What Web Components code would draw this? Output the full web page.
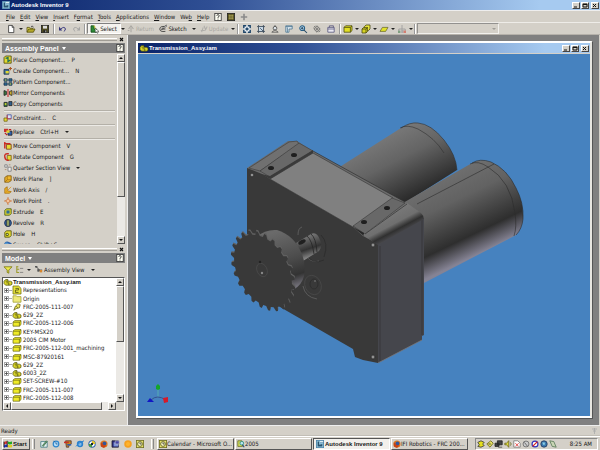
<!DOCTYPE html>
<html lang="en">
<head>
<meta charset="utf-8">
<title>Autodesk Inventor 9</title>
<style>
html, body { margin: 0; height: 100%; }
body {
  --face: #d4d0c8; --dark: #808080; --light: #ffffff; --ink: #181818;
  --bold: bold 6px/8px "Liberation Sans", Arial, sans-serif;
  --title: linear-gradient(90deg, #0a246a, #2f4f94 35%, #a6caf0 90%);
  font: 6px/8px "DejaVu Sans Condensed", "Liberation Sans", Arial, sans-serif; color: var(--ink);
  background: var(--face); overflow: hidden;
}
</style>
</head>
<body>
<inventor-app></inventor-app>
<script>
const ICONS = {
  app: '<rect width="10" height="10" fill="#4b82a8"/><path d="M1 9V1h4v3h4v5z" fill="#9ed0e4"/><path d="M2 8V2h2v4l4-1v3z" fill="#2b5470"/><path d="M5 1h4v2H5z" fill="#dceef4"/>',
  asm: '<path d="M0 4l2-2h3v2h3l2 1v3l-2 1H2L0 7z" fill="#d9d52a" stroke="#3c3c08" stroke-width=".8"/><path d="M3 6h3v3M2 4h3" stroke="#3c3c08" stroke-width=".8" fill="none"/>',
  help: '<rect x="1" y=".5" width="8" height="9" fill="#fffff4" stroke="#333"/><path d="M3.500 3.500Q3.500 2 5 2t1.500 1.500Q6.500 5 5 5v1M5 7v1.200" fill="none" stroke="#222"/>',
  grid: '<rect x=".5" y=".5" width="9" height="9" fill="#55501e" stroke="#222"/><path d="M2 3h6M2 5h6M2 7h6M3.500 2v6M6.500 2v6" stroke="#b9b167" stroke-width=".7"/>',
  plus: '<path d="M5 1v8M1 5h8" stroke="#8a8a8a" stroke-width="2"/>',
  page: '<path d="M2 .5h4.500L8.500 3v6.500H2z" fill="#fff" stroke="#333"/><path d="M6.500.5V3h2" fill="none" stroke="#333"/>',
  open: '<path d="M0 9V3h3l1 1h3v2" fill="#e5dc62" stroke="#554f0c"/><path d="M0 9l2-4h8L8 9z" fill="#b5a92a" stroke="#554f0c"/><path d="M5 2q2-2 3 1" fill="none" stroke="#333"/>',
  save: '<rect x=".5" y=".5" width="9" height="9" fill="#504c20" stroke="#222"/><path d="M2.500 1h5v3.500h-5z" fill="#ddd"/><path d="M3 6.500h4V9H3z" fill="#222"/><path d="M5.500 7h1v2h-1z" fill="#ccc"/>',
  undo: '<path d="M2 5q5-4 6 0 0 2-2 3" fill="none" stroke="#35357c" stroke-width="1.200"/><path d="M0 2v5h4z" fill="#35357c"/>',
  redo: '<path d="M8 5Q3 1 2 5q0 2 2 3" fill="none" stroke="#a5a5a5" stroke-width="1.200"/><path d="M10 2v5H6z" fill="#a5a5a5"/>',
  select: '<path d="M0 1h4v4h3v4H0z" fill="#2d8a36" stroke="#154a1c"/><path d="M3 1l2 1v3" stroke="#d9d52a" fill="none"/><path d="M5 4l5 4-2 .3 1 1.700-1 .5-1-2-1.500 1z" fill="#fff" stroke="#222" stroke-width=".6"/>',
  ret: '<path d="M5 9V3M2 5l3-4 3 4M1 7h2" fill="none" stroke="#a9a7a2" stroke-width="1.300"/>',
  sketch: '<path d="M8 2Q1 1 1 5t7 3" fill="none" stroke="#333"/><path d="M3 6l1-2 5-4 1 1-5 4z" fill="#eee" stroke="#222" stroke-width=".7"/><path d="M4 5h4" stroke="#222"/>',
  update: '<path d="M2 9l2-6M5 1l2 5 2-4M1 7h5" fill="none" stroke="#b0aeaa" stroke-width="1.300"/>',
  zoomall: '<rect x=".5" y=".5" width="9" height="9" fill="#eaf0f5"/><path d="M1 4V1h3M6 1h3v3M9 6v3H6M4 9H1V6" fill="none" stroke="#1e4468" stroke-width="1.800"/><path d="M3 5h4M5 3v4" stroke="#1e4468" stroke-width="2"/>',
  zoomwin: '<rect x="2" y="2" width="6" height="6" fill="#c7d8e6" stroke="#345"/><path d="M2 0v2H0M8 0v2h2M2 10V8H0M8 10V8h2M4 4l4 4" fill="none" stroke="#345"/>',
  zoom: '<circle cx="5" cy="4" r="2.300" fill="#dfe6ea" stroke="#444"/><path d="M5 0v2M5 6L1 9h8L5 6" fill="none" stroke="#555"/>',
  pan: '<path d="M1 9V1h8v4H5v4z" fill="#dde8ef" stroke="#4b7591"/><path d="M1 2h8M3 3v6" stroke="#4b7591"/>',
  lens: '<circle cx="4" cy="4" r="3" fill="#b8d7ec" stroke="#265d85" stroke-width="1.300"/><path d="M6 6l4 4M2.500 4h3M4 2.500v3" stroke="#284b66" stroke-width="1.300"/>',
  rotate: '<path d="M5 1l4 4-4 4-4-4zM3 1L1 3M9 7L7 9M5 3v4M3 5h4" fill="none" stroke="#5b5b5b"/>',
  look: '<path d="M1 3h8v6H1z" fill="#eceaf3" stroke="#57557c"/><path d="M1 5h8M3 3V1h5v2" fill="none" stroke="#57557c"/>',
  shade: '<path d="M0 3l2-2h8v6L8 9H0z" fill="#e2df25" stroke="#4a4a10"/><path d="M0 3h8l2-2M8 3v6" fill="none" stroke="#4a4a10"/>',
  shade2: '<path d="M3 2l2-2h5v5L8 7H3z" fill="#f0ed40" stroke="#4a4a10"/><path d="M0 5l2-2h5v5l-2 2H0z" fill="#d8d422" stroke="#4a4a10"/><path d="M0 5h5l2-2M5 5v5" fill="none" stroke="#4a4a10"/>',
  plane: '<path d="M3 3h7L7 8H0z" fill="#e2e22c" stroke="#55551a" stroke-width=".8"/>',
  ortho: '<path d="M5 0v6M1 9V5h8v4" fill="none" stroke="#999"/><path d="M0 7h3v3H0z" fill="#80a080"/><path d="M4 6h3v4H4z" fill="#aaa"/><path d="M7 7h3v3H7z" fill="#d57e70"/>',
  place: '<path d="M0 2l2-2h7v9H0z" fill="#e2d930" stroke="#4c480a"/><path d="M2 3l3-1v5l3-2" fill="none" stroke="#1d6f57" stroke-width="1.600"/>',
  create: '<path d="M0 3h6v6H0z" fill="#3d6c97" stroke="#1b3048"/><path d="M2 5h4v3H2z" fill="#e2d930"/><path d="M8 0v4M6 2h4" stroke="#a52" stroke-width="1.300"/>',
  pattern: '<g fill="#2f6f9d" stroke="#162f44"><path d="M0 1h4v3H0zM6 1h4v3H6zM0 6h4v3H0zM6 6h4v3H6z"/></g><path d="M1 2h2v1H1zM7 7h2v1H7z" fill="#e2d930"/>',
  mirror: '<path d="M0 2l3 1v4L0 8z" fill="#3b7d42" stroke="#222"/><path d="M10 2L7 3v4l3 1z" fill="#d8b930" stroke="#222"/><path d="M5 0v10" stroke="#c22" stroke-width="1.300"/>',
  copy: '<path d="M0 3h4v5H0z" fill="#3b7d42" stroke="#222"/><path d="M6 2h4v5H6z" fill="#2f6090" stroke="#222"/><path d="M1 4h2v2H1z" fill="#e2d930"/>',
  constraint: '<path d="M4 1h5v5H4z" fill="#dce3f4" stroke="#4153a5"/><path d="M0 5h4v4H0z" fill="#e8dd35" stroke="#736512"/><path d="M4 1v5h5" fill="none" stroke="#c33"/>',
  replace: '<path d="M0 1h5v4H0z" fill="#c9302c"/><path d="M5 4h5v5H5z" fill="#2f62b0" stroke="#222"/><path d="M1 6l3 3M6 2h3" stroke="#b52020" stroke-width="1.500"/><path d="M3 3h4v3H3z" fill="#e2d930"/>',
  move: '<path d="M3 3h6v6H3z" fill="#e4dc35" stroke="#7a3510"/><path d="M0 2h8M1 0v8" stroke="#cc2a22" stroke-width="1.800"/>',
  rot: '<path d="M4 3h5v6H4z" fill="#e4dc35" stroke="#7a5510"/><path d="M6 1Q0 0 1 5t5 4" fill="none" stroke="#cc2a22" stroke-width="1.800"/>',
  section: '<path d="M1 1h3v3H1zM5 4h4v5H5z" fill="#eee" stroke="#777"/><path d="M1 7h2M6 1h2" stroke="#a86"/>',
  wplane: '<path d="M1 3l3-2h5v6L6 9H1z" fill="#f0b92d" stroke="#7a5510"/><path d="M4 1v5l-3 3M4 6h5" fill="none" stroke="#a56d10"/>',
  waxis: '<path d="M1 3l3-2v5l5 1-2 2H1z" fill="#f0b92d" stroke="#a56d10"/><path d="M1 9l8-8" stroke="#d8941d"/>',
  wpoint: '<path d="M5 0v10M0 5h10" stroke="#d48751" stroke-width="1.200"/><path d="M5 2l3 3-3 3-3-3z" fill="#f3c49c" stroke="#c4662a"/>',
  extrude: '<path d="M1 3l2-2h6v6L7 9H1z" fill="#e2d930" stroke="#3f5412"/><path d="M3 3h4v4H3z" fill="#2e6b94"/>',
  revolve: '<circle cx="5" cy="5" r="4.300" fill="#3269a0" stroke="#1c2a52"/><path d="M3 1h4v8H3z" fill="#d9d34c" stroke="#1c2a52"/><path d="M5 1v8" stroke="#274f78"/>',
  hole: '<path d="M1 3l2-2h6v6L7 9H1z" fill="#e2d930" stroke="#4f4c10"/><circle cx="4" cy="5.500" r="2" fill="#58620c"/><circle cx="4" cy="5.500" r=".8" fill="#eee"/>',
  sweep: '<path d="M1 8Q1 1 5 2t5 4" fill="none" stroke="#2d65ae" stroke-width="2.500"/><circle cx="3" cy="4" r="2" fill="#5599cc"/>',
  filter: '<path d="M0 1h10L6 5v4L4 8V5z" fill="#f0ed4a" stroke="#76720e"/>',
  treeview: '<path d="M1 0v8h3M1 4h3M1 1h2" fill="none" stroke="#9b9a2c" stroke-width="1.300"/><path d="M5 3h4M5 8h4" stroke="#777"/>',
  asmview: '<path d="M1 1l3 2v4M4 5h5" fill="none" stroke="#444"/><path d="M0 0h3v2H0zM3 4h3v3H3z" fill="#555"/><path d="M6 5h3v3H6z" fill="#d8872d"/>',
  rep: '<path d="M0 0h7l3 3v7H0z" fill="#e9e53a" stroke="#77740f"/><path d="M3 3h4v2H3v3h4" fill="none" stroke="#4b4b18"/>',
  folder: '<path d="M0 1h4l1 1h5v7H0z" fill="#eeea7a" stroke="#a5a13c"/>',
  part: '<path d="M0 4l2-2h8v5L8 9H0z" fill="#efec28" stroke="#5a580c" stroke-width=".8"/><path d="M0 4h8l2-2M8 4v5" fill="none" stroke="#5a580c" stroke-width=".8"/>',
  pin: '<path d="M1 9l2-5 3-3 3 1-1 4-4 1z" fill="#eae45c" stroke="#666317"/><path d="M4 4l2 2" stroke="#666317"/>',
  start: '<path d="M0 3q2-2 4-1v3Q2 4 0 6z" fill="#d33"/><path d="M5 2q2 1 5 0v3q-3 1-5 0z" fill="#2a2"/><path d="M0 7q2-2 4-1v3q-2-1-4 1z" fill="#23c"/><path d="M5 6q2 1 5 0v3q-3 1-5 0z" fill="#dc2"/><path d="M4 1v8M0 2v7" stroke="#222" stroke-width="1.200"/>',
  desktop: '<path d="M1 2h8v7H1z" fill="#e8f3f0" stroke="#3c7781"/><path d="M3 7l5-6 1 1-5 6z" fill="#7fb565" stroke="#365"/>',
  outlook: '<circle cx="5" cy="5" r="3.500" fill="#b6ddf6" stroke="#2f86cc" stroke-width="1.500"/><path d="M5 3v2h2M2 1l2 2" stroke="#1b5d9c" fill="none"/>',
  zip: '<path d="M2 1h7v4L6 7v2H3z" fill="#c28a25" stroke="#533"/><path d="M0 2h6v2H0z" fill="#c92f24"/><path d="M4 5h5v2H4z" fill="#365ba5"/>',
  ie: '<circle cx="5" cy="5" r="3" fill="#d4ecfb" stroke="#2b82cf" stroke-width="2"/><path d="M3 5h5M0 8Q3 3 10 1" stroke="#2b82cf" stroke-width="1.200" fill="none"/>',
  media: '<circle cx="5" cy="5" r="4" fill="#fff" stroke="#2c62a8" stroke-width="1.300"/><path d="M5 1a4 4 0 0 1 4 4H5z" fill="#e8c524"/><path d="M5 9a4 4 0 0 1-4-4h4z" fill="#4ba13a"/><circle cx="5" cy="5" r="1.500" fill="#123"/>',
  firefox: '<circle cx="5" cy="5" r="4.500" fill="#e07a20"/><circle cx="5.500" cy="4.500" r="2.500" fill="#31569c"/><path d="M1 3q2 0 3 3l4 1-3 3-4-2z" fill="#c74416"/>',
  calc: '<path d="M0 1h8v8H0z" fill="#29297f" stroke="#223"/><path d="M2 3h6v5H2z" fill="#7d92d5"/><path d="M4 1h5v4H4z" fill="#4444a4" stroke="#ccc" stroke-width=".7"/>',
  orange: '<circle cx="5" cy="5" r="4.700" fill="#f6a01d"/><circle cx="5" cy="5" r="2.500" fill="#ffb42c"/>',
  clock: '<rect x=".5" y=".5" width="9" height="9" fill="#e8e36a" stroke="#6d6c20"/><circle cx="5" cy="5" r="3" fill="#f8f5be" stroke="#55551c"/><path d="M5 3v2h2" fill="none" stroke="#333"/>',
  lensfolder: '<path d="M1 1h5l1 7H1z" fill="#d5dc58" stroke="#687026"/><circle cx="6" cy="4" r="2.300" fill="#b9e4ee" stroke="#287"/><path d="M7 6l2 3" stroke="#247" stroke-width="1.300"/>',
  t1: '<path d="M1 3l4-2 4 2-2 2 2 2-4 2-4-1 2-2z" fill="#e6e01e" stroke="#333"/>',
  t2: '<path d="M1 5l5-4 3 3-4 5z" fill="#e6e05e" stroke="#66621a"/><path d="M3 5h3" stroke="#333"/>',
  t3: '<path d="M3 1h6v5H3zM0 4h5v4H0z" fill="#444" stroke="#222"/><path d="M4 9h5" stroke="#444"/>',
  t4: '<path d="M1 4h2l3-3v8L3 6H1z" fill="#ddd83a" stroke="#66621a"/><path d="M8 3q2 2 0 4" fill="none" stroke="#66621a"/>',
  t5: '<path d="M1 1h5l3 3v5H1z" fill="#fff" stroke="#777"/><path d="M3 4l4 4M7 4L3 8" stroke="#d22"/>',
  t6: '<circle cx="5" cy="5" r="3.700" fill="#ccc" stroke="#666"/><path d="M3 3l4 5" stroke="#555"/>',
  t7: '<circle cx="5" cy="5" r="3.700" fill="#fff" stroke="#33b" stroke-width="1.500"/><path d="M2 8l6-6" stroke="#d22" stroke-width="1.500"/>',
  t8: '<circle cx="5" cy="5" r="4" fill="#3c7bb2" stroke="#235"/><path d="M3 3h3v3H4z" fill="#8fd0e4"/>',
  t9: '<path d="M1 1l5 1 3 7-5-1z" fill="#c9d5b4" stroke="#575"/>'
};

const define = (name, css, html) => customElements.define(name, class extends HTMLElement {
  connectedCallback() {
    if (this.shadowRoot) return;
    this.attachShadow({ mode: 'open' }).innerHTML =
      `<style>:host{box-sizing:border-box}*{box-sizing:border-box}button,select{font:inherit;color:inherit;margin:0;padding:0;border:0;background:none;border-radius:0}${css}</style>` +
      (typeof html === 'function' ? html(this) : html);
  }
});

define('ui-icon', ':host{display:block;flex:none;width:8px;height:8px}svg{display:block;width:100%;height:100%;overflow:visible}',
  el => `<svg viewBox="0 0 10 10" aria-hidden="true">${ICONS[el.getAttribute('name')] || ''}</svg>`);

define('ui-arrow', ':host{display:block;flex:none;width:4px;height:2px}svg{display:block;width:4px;height:2px}',
  '<svg viewBox="0 0 4 2" aria-hidden="true"><path d="M0 0h4L2 2z" fill="#222"/></svg>');

define('ui-grip', ':host{display:flex;align-items:center;gap:2px;height:8px;padding:0 3px 0 2px}i{flex:1;height:3px;border-top:1px solid #fff;border-bottom:1px solid #a09c94}button{width:5px;height:5px}svg{display:block}',
  '<i></i><button aria-label="Close panel"><svg width="5" height="5" viewBox="0 0 5 5"><path d="M1 1l3 3M4 1L1 4" stroke="#111" stroke-width="1.200"/></svg></button>');

define('window-buttons', ':host{display:flex;gap:1px}button{width:8px;height:7px;background:var(--face);border:1px solid;border-color:#fff #444 #444 #fff}button:last-child{margin-left:1px}svg{display:block;width:6px;height:5px}',
  [['Minimize', 'M1 4h3'], ['Restore', 'M1 1h4v3H1zM1 1.500h4'], ['Close', 'M1 1l3 3M4 1L1 4']].map(([l, d]) =>
    `<button aria-label="${l}"><svg viewBox="0 0 6 5"><path d="${d}" fill="none" stroke="#111"/></svg></button>`).join(''));

define('title-bar', ':host{display:flex;align-items:center;gap:1px;height:10px;padding:0 1px 0 2px;background:var(--title);color:#fff;font:var(--bold)}span{flex:1;white-space:nowrap}',
  el => `<ui-icon name="${el.getAttribute('icon')}"></ui-icon><span><slot></slot></span><window-buttons></window-buttons>`);

define('menu-bar', `:host{display:flex;align-items:center;height:12px;padding:0 6px;border-top:1px solid #eee;gap:5px}
  button{white-space:nowrap}`,
  [['', 'F', 'ile'], ['', 'E', 'dit'], ['', 'V', 'iew'], ['', 'I', 'nsert'], ['F', 'o', 'rmat'], ['', 'T', 'ools'], ['', 'A', 'pplications'], ['', 'W', 'indow'], ['We', 'b', ''], ['', 'H', 'elp']]
    .map(([a, b, c]) => `<button>${a}<u>${b}</u>${c}</button>`).join('') + '<ui-icon name="help"></ui-icon><ui-icon name="grid"></ui-icon><ui-icon name="plus"></ui-icon>');

define('tool-item', `:host{display:flex;flex:none;height:100%}
  button{flex:1;display:flex;align-items:center;justify-content:center;gap:1px;white-space:nowrap}
  :host([on]) button{background:#f4f2ee;border:1px solid;border-color:#808080 #fff #fff #808080}
  :host([off]) button{color:#a9a7a2}`,
  el => `<button aria-label="${el.getAttribute('label') || ''}" ${el.hasAttribute('off') ? 'disabled' : ''}>${el.hasAttribute('icon') ? `<ui-icon name="${el.getAttribute('icon')}"></ui-icon>` : '<ui-arrow></ui-arrow>'}<slot></slot></button>`);

const T = (icon, w, label, text = '', extra = '') => `<tool-item icon="${icon}" label="${label}" style="width:${w}px" ${extra}>${text}</tool-item>`;
const A = (w) => `<tool-item label="More" style="width:${w}px"></tool-item>`;
define('tool-bar', `:host{display:flex;align-items:center;height:13px;padding:0 4px;border-top:1px solid #eeece8;border-bottom:1px solid #b5b1aa}
  hr{flex:none;width:2px;height:10px;margin:0 1px;border:0;border-left:1px solid #999;border-right:1px solid #fff}
  select{width:82px;height:11px;background:var(--face);border:1px solid;border-color:#777 #fff #fff #777;appearance:none}
  label{display:flex;align-items:center}label ui-arrow{margin-left:-7px}`,
  T('page', 14, 'New') + A(6) + T('open', 14, 'Open') + T('save', 14, 'Save') + '<hr>' + T('undo', 13, 'Undo') + T('redo', 14, 'Redo') + '<hr>' +
  T('select', 34, 'Select', 'Select', 'on') + A(4) + T('ret', 31, 'Return', 'Return', 'off') + T('sketch', 34, 'Sketch', 'Sketch') + A(8) + T('update', 32, 'Update', 'Update', 'off') + A(6) + '<hr>' +
  T('zoomall', 13, 'Zoom all') + T('zoomwin', 15, 'Zoom window') + T('zoom', 14, 'Zoom') + T('pan', 14, 'Pan') + T('lens', 14, 'Zoom selected') + T('rotate', 14, 'Rotate') + T('look', 14, 'Look at') + '<hr>' +
  T('shade', 12, 'Display') + A(6) + T('shade2', 12, 'Camera') + A(6) + T('plane', 12, 'Shadow') + A(5) + T('ortho', 14, 'Analysis') + A(4) + '<hr>' +
  '<label><select aria-label="Style" disabled><option></option></select><ui-arrow></ui-arrow></label>');

define('panel-head', `:host{display:flex;align-items:center;height:10px;margin:0 2px;padding:0 1px 0 3px;background:var(--dark);color:#fff;font:bold 7px/9px "Liberation Sans",Arial,sans-serif}
  button{display:flex;align-items:center;gap:3px}.h{margin-left:auto}svg{display:block}`,
  `<button><slot></slot><svg width="4" height="3" viewBox="0 0 4 3"><path d="M0 0h4L2 3z" fill="#fff"/></svg></button><button class="h" aria-label="Help"><ui-icon name="help"></ui-icon></button>`);

define('scroll-bar', `:host{display:flex;flex-direction:column;width:8px;background:#ebe9e5}:host([flat]){flex-direction:row;width:auto;height:8px}
  button,i{flex:none;display:grid;place-items:center;width:8px;height:8px;background:var(--face);border:1px solid;border-color:#fff #555 #555 #fff}
  .t{height:var(--thumb)}.s{flex:1;width:auto;border:0;background:none}:host([flat]) .t{width:var(--thumb);height:8px}svg{display:block}`,
  el => { const f = el.hasAttribute('flat'); const s = d => `<svg width="4" height="4" viewBox="0 0 4 4"><path d="${d}" fill="#111"/></svg>`;
    return `<button aria-label="Back">${s(f ? 'M3 0v4L1 2z' : 'M0 3h4L2 1z')}</button><i class="t"></i><i class="s"></i><button aria-label="Forward">${s(f ? 'M1 0v4l2-2z' : 'M0 1h4L2 3z')}</button>`; });

define('command-item', ':host{display:block;height:11px}button{display:flex;align-items:center;height:11px;gap:1px;white-space:nowrap}kbd{font:inherit;margin-left:5px}ui-arrow{margin-left:5px}',
  el => `<button><ui-icon name="${el.getAttribute('icon')}"></ui-icon><slot></slot>${el.hasAttribute('key') ? `<kbd>${el.getAttribute('key')}</kbd>` : ''}${el.hasAttribute('more') ? '<ui-arrow></ui-arrow>' : ''}</button>`);

const C = (icon, text, key, more) => `<command-item icon="${icon}" ${key ? `key="${key}"` : ''} ${more ? 'more' : ''}>${text}</command-item>`;
define('command-list', `:host{display:flex;height:190px;margin:1px 2px 0;overflow:hidden}
  div{flex:1;min-width:0;padding:0 2px;overflow:hidden}hr{height:2px;margin:1px 0 0;border:0;border-top:1px solid #b4b0a8;border-bottom:1px solid #eceae6}`,
  '<div>' + C('place', 'Place Component...', 'P') + C('create', 'Create Component...', 'N') + C('pattern', 'Pattern Component...') + C('mirror', 'Mirror Components') + C('copy', 'Copy Components') + '<hr>' +
  C('constraint', 'Constraint...', 'C') + '<hr>' + C('replace', 'Replace', 'Ctrl+H', 1) + '<hr>' + C('move', 'Move Component', 'V') + C('rot', 'Rotate Component', 'G') + C('section', 'Quarter Section View', '', 1) +
  C('wplane', 'Work Plane', ']') + C('waxis', 'Work Axis', '/') + C('wpoint', 'Work Point', '.') + C('extrude', 'Extrude', 'E') + C('revolve', 'Revolve', 'R') + C('hole', 'Hole', 'H') + C('sweep', 'Sweep', 'Shift+S') +
  '</div><scroll-bar style="--thumb:135px"></scroll-bar>');

define('model-tools', ':host{display:flex;align-items:center;gap:4px;height:14px;padding:0 4px}button{display:flex;align-items:center;gap:1px}ui-arrow{margin-left:2px}',
  '<button aria-label="Filter"><ui-icon name="filter"></ui-icon></button><button aria-label="Tree display"><ui-icon name="treeview"></ui-icon><ui-arrow></ui-arrow></button><button><ui-icon name="asmview"></ui-icon>Assembly View</button><ui-arrow></ui-arrow>');

define('tree-row', `:host{display:flex;align-items:center;gap:2px;min-height:0;padding-left:1px;white-space:nowrap}
  :host([root]){font:var(--bold);gap:1px}button{width:5px;height:5px;border:1px solid #aaa;background:#fff;flex:none}svg{display:block}
  i{flex:none;width:3px;height:1px;margin:0 -1px 0 -2px;background:#aaa}`,
  el => `${el.hasAttribute('root') ? '' : '<button aria-label="Expand"><svg width="3" height="3" viewBox="0 0 3 3"><path d="M0 1.500h3M1.500 0v3" stroke="#444" stroke-width=".8"/></svg></button><i></i>'}<ui-icon name="${el.getAttribute('icon')}"></ui-icon><slot></slot>`);

define('model-tree', `:host{display:grid;grid-template:124px 8px/minmax(0,1fr) 8px;margin:0 2px;background:#fff;border:1px solid;border-color:#555 #fff #fff #555}
  div{display:grid;grid-auto-rows:minmax(0,1fr);overflow:hidden}.v{--thumb:56px}.h{--thumb:91px}.c{background:var(--face)}`,
  '<div><tree-row root icon="asm">Transmission_Assy.iam</tree-row>' +
  [['rep', 'Representations'], ['folder', 'Origin'], ['pin', 'FRC-2005-111-007'], ['asm', '629_2Z'], ['part', 'FRC-2005-112-006'], ['part', 'KEY-MSX20'], ['part', '2005 CIM Motor'], ['part', 'FRC-2005-112-001_machining'], ['part', 'MSC-87920161'], ['asm', '629_2Z'], ['asm', '6003_2Z'], ['part', 'SET-SCREW-#10'], ['part', 'FRC-2005-111-007'], ['part', 'FRC-2005-112-008']]
    .map(([i, t]) => `<tree-row icon="${i}">${t}</tree-row>`).join('') + '</div><scroll-bar class="v"></scroll-bar><scroll-bar class="h" flat></scroll-bar><span class="c"></span>');

define('side-dock', ':host{display:block;flex:none;width:128px;background:var(--face);border-right:1px solid #eee}.g{margin-top:1px}',
  '<ui-grip></ui-grip><panel-head>Assembly Panel</panel-head><command-list></command-list><ui-grip class="g"></ui-grip><panel-head>Model</panel-head><model-tools></model-tools><model-tree></model-tree>');

const teeth = () => {
  const n = 24, p = [];
  for (let i = 0; i < n; i++) for (const [o, r] of [[-.3, .91], [-.12, 1.01], [.12, 1.01], [.3, .91]]) {
    const t = (i + o) / n * 2 * Math.PI;
    p.push(`${(Math.cos(t) * 27.5 * r).toFixed(1)},${(Math.sin(t) * 43 * r).toFixed(1)}`);
  }
  return p.join(' ');
};
define('model-view', ':host{display:block;min-height:0;background:#4682bf}svg{display:block;width:100%;height:100%}', () => `
<svg viewBox="138 54 452 362" role="img" aria-label="Transmission assembly">
<defs>
<linearGradient id="a" gradientUnits="userSpaceOnUse" x1="378" y1="140" x2="408" y2="199"><stop offset="0" stop-color="#777"/><stop offset=".4" stop-color="#646464"/><stop offset="1" stop-color="#2b2b2b"/></linearGradient>
<linearGradient id="b" gradientUnits="userSpaceOnUse" x1="442" y1="179" x2="478" y2="254"><stop offset="0" stop-color="#6e6e6e"/><stop offset=".3" stop-color="#626262"/><stop offset=".76" stop-color="#2e2e2e"/><stop offset="1" stop-color="#858394"/></linearGradient>
<linearGradient id="c" gradientUnits="userSpaceOnUse" x1="386" y1="217" x2="396" y2="236"><stop offset="0" stop-color="#777"/><stop offset=".45" stop-color="#6f6f6f"/><stop offset=".75" stop-color="#303030"/><stop offset="1" stop-color="#4a4a4e"/></linearGradient>
<linearGradient id="d" gradientUnits="userSpaceOnUse" x1="282" y1="230" x2="300" y2="286"><stop offset="0" stop-color="#6a6a6a"/><stop offset=".5" stop-color="#4c4c4c"/><stop offset=".8" stop-color="#333"/><stop offset="1" stop-color="#77757f"/></linearGradient>
<linearGradient id="e" gradientUnits="userSpaceOnUse" x1="305" y1="236" x2="312" y2="257"><stop offset="0" stop-color="#777"/><stop offset=".6" stop-color="#333"/><stop offset="1" stop-color="#888"/></linearGradient>
</defs>
<path d="M338 168L401 128Q410 122 418 123Q431 124 444 140Q456 155 457 170L400 206z" fill="url(#a)"/>
<path d="M400 128Q407 124 418 129Q435 138 444 153M401 128Q410 122 418 123Q431 124 444 140Q456 155 457 170" fill="none" stroke="#303030" stroke-width=".6"/>
<path d="M403 203L472 163Q480 158 491 162Q507 169 516 188Q524 203 523 219Q522 229 516 235L424 283L400 220z" fill="url(#b)"/>
<path d="M470 164Q478 160 488 167Q511 181 515 213Q517 227 514 236M417 204L494 164M472 163Q480 158 491 162Q507 169 516 188Q524 203 523 219Q522 229 516 235" fill="none" stroke="#2c2c2c" stroke-width=".6"/>
<path d="M247 168L288 141L297 141L313 151L405 202L421 213Q424 216 424 219L378 245L247 240z" fill="#6b6b6b"/>
<path d="M247 168L262 174L270 179L353 227L363 236L378 244V363L363 360L355 357L353 349L247 288z" fill="#393939"/>
<path d="M378 244L424 218V335L422 336V340L378 363z" fill="#45464c"/>
<path d="M378 363L422 340" stroke="#77777b" stroke-width=".8"/>
<path d="M380 246V361M422 220V335" stroke="#303034" stroke-width=".7"/>
<path d="M270 179L313 153L393 198L353 227z" fill="#808080" stroke="#333" stroke-width=".6"/>
<path d="M249 168L289 142L297 141L299 144L260 171z" fill="#707070" stroke="#333" stroke-width=".5"/>
<path d="M260 171L299 143L313 151L270 177z" fill="#686868" stroke="#333" stroke-width=".5"/>
<path d="M261 174L270 179L313 153V150L270 176z" fill="#3a3a3a"/>
<path d="M353 226L392 198L405 203L365 234z" fill="#686868" stroke="#333" stroke-width=".5"/>
<path d="M353 227L364 233V236z" fill="#272727"/>
<path d="M363 235L407 203L421 213Q424 216 424 219L378 245z" fill="url(#c)"/>
<path d="M365 234L407 204M313 151L405 202" stroke="#303030" stroke-width=".7"/>
<g fill="#1f1f1f"><ellipse cx="271" cy="168" rx="3" ry="2"/><ellipse cx="294" cy="155" rx="3" ry="2"/><ellipse cx="364" cy="222" rx="3" ry="2"/><ellipse cx="387" cy="208" rx="3" ry="2"/></g>
<g fill="#929292" stroke="#222" stroke-width=".6"><circle cx="252" cy="175" r="1.800"/><circle cx="373" cy="245" r="1.900"/><circle cx="373" cy="357" r="1.900"/></g>
<g fill="none" stroke="#686868" stroke-width=".7"><path d="M298 235q0-7 4-8M308 258q5 5 11 3M303 286q2 11 14 13"/><ellipse cx="313" cy="285" rx="8" ry="10" transform="rotate(-25 313 285)" stroke="#4a4a4a"/><ellipse cx="314" cy="284" rx="4" ry="5" stroke="#2a2a2a"/><path d="M304 252q8 14 20 8M321 235q8 8 3 22" stroke="#2a2a2a"/></g>
<circle cx="315" cy="281" r="1" fill="#666"/>
<path d="M296 243L311 234Q317 231 320 240Q323 246 319 251L303 261z" fill="url(#e)"/>
<path d="M307 236q5 4 7 18M311 234q5 4 6 18" fill="none" stroke="#252525" stroke-width=".8"/><ellipse cx="302" cy="242" rx="4" ry="2" transform="rotate(-28 302 242)" fill="#202020"/>
<path d="M256 237Q266 229 277 230Q294 235 302 254Q306 264 304 276Q302 285 293 290z" fill="url(#d)"/>
<g transform="translate(263 271) rotate(-29)"><polygon points="${teeth()}" transform="translate(1 -1)" fill="#606060"/><polygon points="${teeth()}" fill="#393939"/></g>
<g fill="none" stroke="#4c4c4c" stroke-width=".7"><ellipse cx="262" cy="270" rx="5" ry="7" transform="rotate(-25 262 270)"/></g>
<circle cx="260" cy="262" r="1.200" fill="#222"/><circle cx="262" cy="273" r="1.200" fill="#888"/>
<path d="M158 389v8" stroke="#58b8b0" stroke-width=".8"/><path d="M151 400q6-6 15 0" fill="none" stroke="#34528e"/>
<path d="M158 384l2 2v3l-2 1-2-1v-3z" fill="#14a52a"/><path d="M147 402l3-4 4 4z" fill="#1116c4"/><path d="M163 398l5-1v5l-4 1z" fill="#d51a2a"/>
</svg>`);

define('doc-window', `:host{display:grid;grid-template-rows:10px minmax(0,1fr);border:2px solid;border-color:#fff #e8e6e0 #fff #fff;gap:1px;background:var(--face);box-shadow:1px 1px #555}`,
  '<title-bar icon="asm">Transmission_Assy.iam</title-bar><model-view></model-view>');

define('status-line', ':host{display:flex;align-items:center;justify-content:space-between;height:11px;padding:1px 3px 0 1px;border-top:1px solid #eee;border-bottom:1px solid #c2beb6}svg{display:block}',
  '<slot></slot><svg width="5" height="8" viewBox="0 0 5 8"><path d="M0 2h5M2.500 1v6M1 4h3" stroke="#aaa" stroke-width=".8"/></svg>');

define('task-button', `:host{display:block;flex:0 1 77px;min-width:0;height:12px}
  button{width:100%;height:100%;display:flex;align-items:center;padding:0 1px;white-space:nowrap;border:1px solid;border-color:#fff #555 #555 #fff;background:var(--face)}
  :host([on]) button{padding:0 2px;gap:1px;font:var(--bold);background:#f2f0ec;border-color:#555 #fff #fff #555}:host([start]) button{font:var(--bold);gap:1px}:host([start]){flex-basis:28px}`,
  el => `<button><ui-icon name="${el.getAttribute('icon')}"></ui-icon><slot></slot></button>`);

define('task-bar', `:host{display:flex;align-items:center;height:14px;padding:0 2px;border-top:1px solid #fff}
  hr{flex:none;width:3px;height:10px;margin:0 3px 0 2px;border:0;border-left:1px solid #fff;border-right:1px solid #888}
  .q{display:flex;gap:4px;padding:0 5px 0 2px}.q button{display:flex}.w{flex:1;display:flex;gap:1px;min-width:0}
  .t{flex:none;width:123px;height:12px;display:flex;align-items:center;gap:1px;padding:0 5px 0 1px;border:1px solid;border-color:#888 #fff #fff #888}.t time{margin-left:auto}`,
  '<task-button start icon="start">Start</task-button><hr><div class="q">' + ['desktop', 'outlook', 'zip', 'ie', 'media', 'firefox', 'calc', 'orange', 'clock'].map(n => `<button aria-label="${n}"><ui-icon name="${n}"></ui-icon></button>`).join('') +
  '</div><hr><div class="w"><task-button icon="clock">Calendar - Microsoft O...</task-button><task-button icon="lensfolder">2005</task-button><task-button icon="app" on>Autodesk Inventor 9</task-button><task-button icon="firefox">IFI Robotics - FRC 200...</task-button></div><div class="t">' +
  ['t1', 't2', 't3', 't4', 't5', 't6', 't7', 't8', 't9'].map(n => `<ui-icon name="${n}"></ui-icon>`).join('') + '<time>8:25 AM</time></div>');

define('inventor-app', `:host{display:flex;flex-direction:column;height:100vh}
  main{flex:1;display:flex;min-height:0;border-right:1px solid var(--face)}.w{flex:1;min-width:0;display:grid;background:var(--dark);padding:6px 7px 7px 8px}`,
  '<title-bar icon="app">Autodesk Inventor 9</title-bar><menu-bar></menu-bar><tool-bar></tool-bar><main><side-dock></side-dock><div class="w"><doc-window></doc-window></div></main><status-line>Ready</status-line><task-bar></task-bar>');
</script>
</body>
</html>
